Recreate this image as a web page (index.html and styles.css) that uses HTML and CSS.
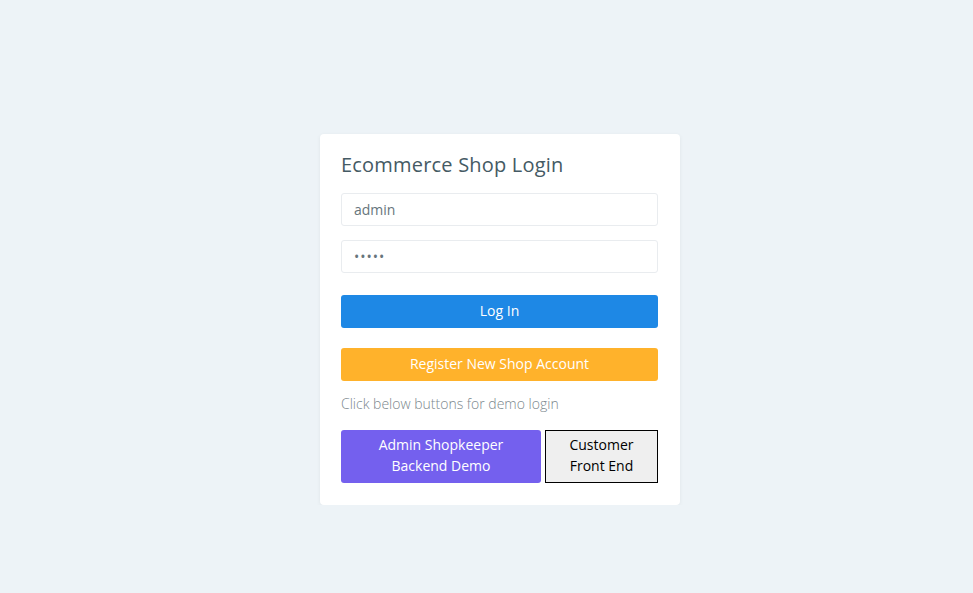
FILE: index.html
```html
<!DOCTYPE html>
<html lang="en">
<head>
    <meta charset="UTF-8">
    <meta name="viewport" content="width=device-width, initial-scale=1.0">
    <title>Ecommerce Shop Login</title>
    <link rel="stylesheet" href="styles.css">
</head>
<body>
    <div class="page">
        <div class="login-card">
            <h3 class="login-title">Ecommerce Shop Login</h3>
            <form class="login-form">
                <input type="text" class="form-control" value="admin">
                <input type="password" class="form-control" value="admin">
                <button type="button" class="btn btn-login">Log In</button>
                <button type="button" class="btn btn-register">Register New Shop Account</button>
            </form>
            <p class="demo-note">Click below buttons for demo login</p>
            <div class="demo-buttons">
                <button type="button" class="btn btn-admin">Admin Shopkeeper<br>Backend Demo</button>
                <button type="button" class="btn-customer">Customer<br>Front End</button>
            </div>
        </div>
    </div>
</body>
</html>
```

FILE: styles.css
```css
body {
    margin: 0;
    padding: 0;
    background: #edf3f7;
    font-family: "Open Sans", "Noto Sans", sans-serif;
    color: #67757c;
}
.page {
    display: flex;
    justify-content: center;
    align-items: flex-start;
    padding: 134px 0 0 27px;
}
.login-card {
    width: 317px;
    padding: 21px 22px 22px 21px;
    background: #fff;
    border-radius: 4px;
    box-shadow: 0 1px 4px rgba(0, 0, 0, 0.06);
}
.login-title {
    margin: 0 0 18px;
    font-size: 20px;
    line-height: 20px;
    font-weight: 400;
    color: #455a64;
    letter-spacing: 0.2px;
}
.login-form {
    display: flex;
    flex-direction: column;
}
.form-control {
    box-sizing: border-box;
    height: 33px;
    margin: 0 0 14px;
    padding: 0 12px;
    border: 1px solid #e9ecef;
    border-radius: 3px;
    font-family: inherit;
    font-size: 14px;
    color: #67757c;
    outline: none;
}
.form-control[type="password"] {
    margin-bottom: 22px;
    letter-spacing: 1px;
}
.btn {
    height: 33px;
    padding: 0 0 2px;
    border: none;
    border-radius: 3px;
    font-family: inherit;
    font-size: 14px;
    font-weight: 500;
    color: #fff;
    cursor: pointer;
}
.btn-login {
    background: #1e88e5;
    margin-bottom: 20px;
}
.btn-register {
    background: #ffb22b;
}
.demo-note {
    margin: 12px 0 16px;
    font-size: 14px;
    line-height: 21px;
    font-weight: 300;
    color: #7b878d;
}
.demo-buttons {
    display: flex;
    gap: 4px;
}
.btn-admin {
    width: 200px;
    height: 53px;
    padding-bottom: 3px;
    line-height: 21px;
    background: #7460ee;
}
.btn-customer {
    flex: 1;
    height: 53px;
    padding: 0 0 3px;
    border: 1px solid #000;
    background: #efefef;
    font-family: inherit;
    font-size: 14px;
    line-height: 21px;
    color: #000;
    cursor: pointer;
}
```
